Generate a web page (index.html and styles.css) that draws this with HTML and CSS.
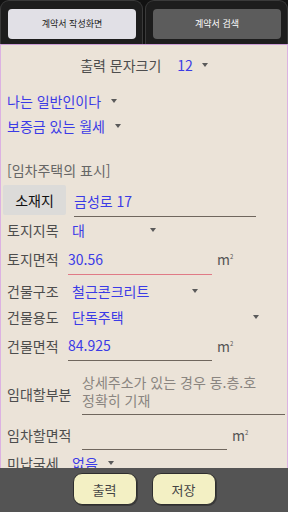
FILE: index.html
```html
<!DOCTYPE html>
<html lang="ko">

<head>
    <meta charset="UTF-8">
    <meta name="viewport" content="width=device-width, initial-scale=1.0">
    <title>계약서 작성화면</title>
    <link rel="stylesheet" href="styles.css">
</head>

<body>
    <div class="app">
        <!-- Вкладки -->
        <div class="tabs">
            <div class="tab"><button class="tab-btn active">계약서 작성화면</button></div>
            <div class="tab"><button class="tab-btn">계약서 검색</button></div>
        </div>

        <div class="form">
            <div class="size-row">
                <span class="size-label">출력 문자크기</span>
                <span class="blue size-value">12</span>
                <span class="arrow"></span>
            </div>

            <div class="pick-row"><span class="blue">나는 일반인이다</span><span class="arrow"></span></div>
            <div class="pick-row"><span class="blue">보증금 있는 월세</span><span class="arrow"></span></div>

            <div class="section-title">[임차주택의 표시]</div>

            <div class="addr-row">
                <button class="addr-btn">소재지</button>
                <div class="edit addr-edit blue">금성로 17</div>
            </div>

            <div class="field-row h26">
                <span class="label">토지지목</span>
                <div class="spinner w92"><span class="blue">대</span><span class="arrow"></span></div>
            </div>

            <div class="field-row h32">
                <span class="label">토지면적</span>
                <div class="edit focused blue">30.56</div>
                <span class="unit">m<sup>2</sup></span>
            </div>

            <div class="field-row h26 mt3">
                <span class="label">건물구조</span>
                <div class="spinner w134"><span class="blue">철근콘크리트</span><span class="arrow"></span></div>
            </div>

            <div class="field-row h26">
                <span class="label">건물용도</span>
                <div class="spinner w195"><span class="blue">단독주택</span><span class="arrow"></span></div>
            </div>

            <div class="field-row h31">
                <span class="label">건물면적</span>
                <div class="edit blue">84.925</div>
                <span class="unit">m<sup>2</sup></span>
            </div>

            <div class="field-row part-row">
                <span class="label wide">임대할부분</span>
                <div class="memo">상세주소가 있는 경우 동.층.호 정확히 기재</div>
            </div>

            <div class="field-row area-row">
                <span class="label wide">임차할면적</span>
                <div class="edit area-edit"></div>
                <span class="unit">m<sup>2</sup></span>
            </div>

            <div class="field-row h26">
                <span class="label">미납국세</span>
                <div class="spinner w50"><span class="blue">없음</span><span class="arrow"></span></div>
            </div>
        </div>

        <div class="footer">
            <button class="foot-btn">출력</button>
            <button class="foot-btn">저장</button>
        </div>
    </div>
</body>

</html>
```

FILE: styles.css
```css
body {
    margin: 0;
    font-family: "Noto Sans CJK KR", "Noto Sans", sans-serif;
}

.app {
    width: 288px;
    height: 512px;
    display: flex;
    flex-direction: column;
    overflow: hidden;
}

/* Вкладки */

.tabs {
    height: 44px;
    flex: none;
    display: flex;
    gap: 2px;
    background: #121212;
}

.tab {
    flex: 1;
    box-sizing: border-box;
    padding: 7px 6px 0 7px;
    background: #1d1d1d;
    border: 1px solid #3a3a3a;
    border-bottom: none;
    border-radius: 9px 9px 0 0;
}

.tab-btn {
    width: 100%;
    height: 30px;
    border: none;
    border-radius: 4px;
    background: #5c5c5c;
    color: #fff;
    font-family: inherit;
    font-size: 9px;
    padding: 0;
}

.tab-btn.active {
    background: #e1e0e6;
    color: #222;
}

/* Форма */

.form {
    flex: 1;
    overflow: hidden;
    background: #ebe3d8;
    border-top: 1px solid #c99bd3;
    border-left: 1px solid #dcb2e2;
    border-right: 1px solid #dcb2e2;
    font-size: 14px;
    color: #4d4d4d;
}

.blue {
    color: #3b3be6;
}

.arrow {
    width: 0;
    height: 0;
    border-left: 3px solid transparent;
    border-right: 3px solid transparent;
    border-top: 4px solid #5a5a5a;
}

.size-row {
    height: 40px;
    margin-bottom: 3px;
    display: flex;
    align-items: center;
    justify-content: center;
}

.size-label {
    margin-right: 16px;
}

.size-value {
    margin-right: 9px;
}

.pick-row {
    height: 25px;
    padding-left: 6px;
    display: flex;
    align-items: center;
    gap: 10px;
}

.section-title {
    margin-top: 20px;
    height: 24px;
    line-height: 24px;
    padding-left: 6px;
    color: #666;
}

.addr-row {
    margin-top: 3px;
    height: 32px;
    padding-left: 2px;
    display: flex;
    align-items: flex-start;
}

.addr-btn {
    width: 63px;
    height: 30px;
    margin-right: 8px;
    border: none;
    border-radius: 2px;
    background: #dcdbd9;
    color: #111;
    font-family: inherit;
    font-size: 14px;
    padding: 0;
}

.edit {
    box-sizing: border-box;
    height: 100%;
    width: 144px;
    display: flex;
    align-items: center;
    border-bottom: 1px solid #6f665d;
}

.edit.focused {
    border-bottom-color: #e07a86;
}

.addr-edit {
    width: 182px;
    height: 32px;
}

.field-row {
    padding-left: 6px;
    display: flex;
    align-items: center;
}

.h26 { height: 26px; }
.h31 { height: 31px; }
.h32 { height: 32px; }
.mt3 { margin-top: 3px; }

.label {
    width: 61px;
    flex: none;
}

.label.wide {
    width: 75px;
}

.spinner {
    box-sizing: border-box;
    padding: 0 4px;
    display: flex;
    align-items: center;
    justify-content: space-between;
}

.w50 { width: 50px; }
.w92 { width: 92px; }
.w134 { width: 134px; }
.w195 { width: 195px; }

.unit {
    margin-left: 5px;
    color: #555;
}

.unit sup {
    font-size: 6px;
}

.part-row {
    padding-top: 12px;
    height: 54px;
    box-sizing: border-box;
}

.memo {
    width: 203px;
    line-height: 18px;
    padding-bottom: 5px;
    border-bottom: 1px solid #6f665d;
    color: #8a8580;
    word-break: keep-all;
}

.area-row {
    height: 35px;
    align-items: flex-end;
}

.area-row .label,
.area-row .unit {
    line-height: 20px;
    margin-bottom: 5px;
}

.area-edit {
    width: 145px;
}

/* Нижняя панель */

.footer {
    height: 44px;
    flex: none;
    box-sizing: border-box;
    padding-top: 5px;
    display: flex;
    justify-content: center;
    gap: 15px;
    background: #545454;
}

.foot-btn {
    width: 64px;
    height: 32px;
    border: 1px solid #2e2e2e;
    border-radius: 9px;
    background: #f3f0c4;
    box-shadow: 1px 1px 0 #3a3a3a;
    color: #444;
    font-family: inherit;
    font-size: 13px;
    padding: 0;
}
```
